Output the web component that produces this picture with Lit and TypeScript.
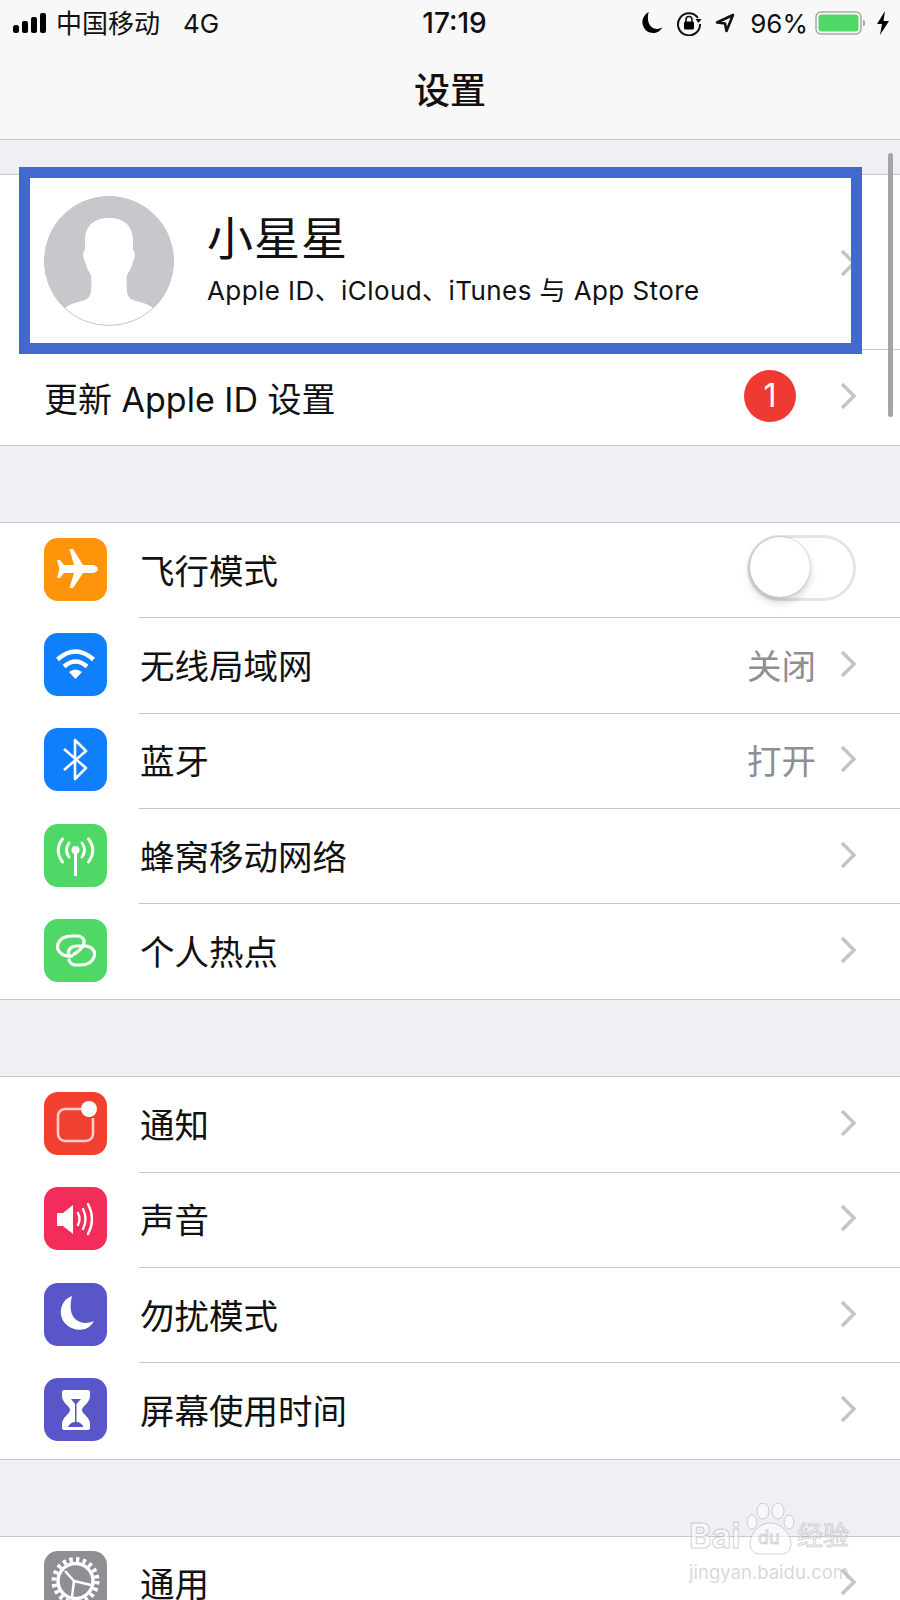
import { LitElement, html, css, svg } from "lit";
import { customElement } from "lit/decorators.js";

// Iconos de la lista, todos sobre un viewBox de 63x63
const ICONS: Record<string, unknown> = {
  plane: svg`<path fill="#fff" d="M54 31c0-2-3-4-6-4H39L29 11h-3.500L30 27H20l-4-5h-3l2.500 9L13 40h3l4-5h10l-4.500 15H29l10-15h9c3 0 6-2 6-4z"/>`,
  wifi: svg`<g fill="none" stroke="#fff" stroke-width="4.500"><path d="M13.500 26.500Q31.500 10.500 49.500 26.500"/><path d="M20 33.500Q31.500 23.500 43 33.500"/></g><path fill="#fff" d="M31.500 46L25 39Q31.500 34 38 39z"/>`,
  bluetooth: svg`<path fill="none" stroke="#fff" stroke-width="2.600" stroke-linejoin="round" d="M20 21L42 40 31 51V12L42 23 20 42"/>`,
  cellular: svg`<g fill="none" stroke="#fff" stroke-width="3" stroke-linecap="round"><path d="M25 19Q20 26 25 33"/><path d="M18.500 15Q10 26 18.500 38"/><path d="M38 19Q43 26 38 33"/><path d="M44.500 15Q53 26 44.500 38"/></g><circle cx="31.500" cy="26" r="4" fill="#fff"/><path stroke="#fff" stroke-width="3" d="M31.500 27V52"/>`,
  hotspot: svg`<g fill="none" stroke="#fff" stroke-width="3.200" stroke-linecap="round"><path d="M28 37C17 38 12 31 14 25C16 19 22 17 28 17H33C39 17 42 22 39 27"/><path d="M25 36C23 31 27 27 33 27H42C49 28 52 33 50 38C48 44 42 46 36 46H32C28 46 26 44 25 41"/><path d="M30 35C33 33 36 32 38 28"/></g>`,
  notify: svg`<path fill="none" stroke="#fff" stroke-opacity=".75" stroke-width="2.600" d="M37 17H21a7 7 0 0 0-7 7v18a7 7 0 0 0 7 7h21a7 7 0 0 0 7-7V26"/><circle cx="45" cy="17" r="8" fill="#fff"/>`,
  sound: svg`<path fill="#fff" d="M13 26h6l10-8v29l-10-8h-6z"/><g fill="none" stroke="#fff" stroke-width="2.400" stroke-linecap="round"><path d="M34 26Q37 32 34 38"/><path d="M39 22Q44 32 39 42"/><path d="M44 17Q52 32 44 47"/></g>`,
  moon: svg`<path fill="#fff" d="M28 13C19 16 16 25 17 32c2 11 14 17 24 14 3-1 7-4 9-8-11 5-21 0-23-10-1-5 0-11 1-15z"/>`,
  hourglass: svg`<path fill="#fff" d="M20 12h24a2 2 0 0 1 2 2v4c0 7-8 10-8 14s8 7 8 14v4a2 2 0 0 1-2 2H20a2 2 0 0 1-2-2v-4c0-7 8-10 8-14s-8-7-8-14v-4a2 2 0 0 1 2-2z"/><path fill="#5856c8" d="M27 21h10l-4.500 5v18c3 0 6 2 7 5H24c1-3 4-5 7-5V26z"/>`,
  gear: svg`<circle cx="31.500" cy="30" r="17.500" fill="none" stroke="#fff" stroke-width="3.500"/><circle cx="31.500" cy="30" r="21.500" fill="none" stroke="#fff" stroke-width="5" stroke-dasharray="3.400 3.350"/><path fill="none" stroke="#fff" stroke-width="2.500" d="M30 30L21 20M30 30L47 34M30 30L28 46"/>`,
};

// Secciones de ajustes: [icono, color, texto, valor]
const GROUPS = [
  [
    { icon: "plane", color: "#fd9409", label: "飞行模式", toggle: true },
    { icon: "wifi", color: "#107ffb", label: "无线局域网", value: "关闭" },
    { icon: "bluetooth", color: "#107ffb", label: "蓝牙", value: "打开" },
    { icon: "cellular", color: "#4fd865", label: "蜂窝移动网络" },
    { icon: "hotspot", color: "#4fd865", label: "个人热点" },
  ],
  [
    { icon: "notify", color: "#f1402f", label: "通知" },
    { icon: "sound", color: "#f42c5a", label: "声音" },
    { icon: "moon", color: "#5856c8", label: "勿扰模式" },
    { icon: "hourglass", color: "#5856c8", label: "屏幕使用时间" },
  ],
  [{ icon: "gear", color: "#8e8e93", label: "通用" }],
];

const chevron = html`<svg class="chevron" viewBox="0 0 16 28">
  <path d="M2 2l12 12L2 26" />
</svg>`;

@customElement("app-root")
export class AppRoot extends LitElement {
  static styles = css`
    :host {
      display: block;
      position: relative;
      width: 900px;
      height: 1600px;
      overflow: hidden;
      background: #efeff4;
      color: #111;
      font-family: Inter, "Noto Sans CJK SC", sans-serif;
    }

    /* Barra superior */
    .header {
      height: 139px;
      background: #f8f8f9;
      border-bottom: 1px solid #c4c4c8;
    }
    .status {
      display: flex;
      align-items: center;
      height: 46px;
      padding: 0 10px 0 13px;
      font-size: 26px;
    }
    .status svg {
      flex: none;
      display: block;
    }
    .carrier {
      margin-left: 8px;
      font-size: 26px;
      margin-top: -4px;
    }
    .net {
      margin-left: 23px;
    }
    .clock {
      position: absolute;
      left: 0;
      right: 0;
      top: 0;
      height: 46px;
      line-height: 46px;
      text-align: center;
      font-weight: 500;
      font-size: 28px;
      padding-left: 9px;
    }
    .status-right {
      display: flex;
      align-items: center;
      margin-left: auto;
    }
    .title {
      text-align: center;
      font-size: 36px;
      font-weight: 500;
      line-height: 44px;
      margin-top: 23px;
    }

    /* Secciones */
    .group {
      background: #fff;
      border-top: 1px solid #c8c8cc;
      border-bottom: 1px solid #c8c8cc;
      margin-top: 76px;
    }
    .group.account {
      margin-top: 34px;
    }
    .profile {
      display: flex;
      align-items: center;
      height: 175px;
      padding: 0 44px;
      position: relative;
    }
    .profile::after,
    .row + .row::before {
      content: "";
      position: absolute;
      right: 0;
      top: -1px;
      border-top: 1px solid #c8c8cc;
    }
    .profile::after {
      top: auto;
      bottom: 0;
      left: 44px;
    }
    .row + .row::before {
      left: 139px;
    }
    .avatar {
      width: 130px;
      height: 130px;
      flex: none;
      margin-top: -4px;
    }
    .who {
      margin-left: 33px;
      flex: 1;
    }
    .name {
      font-size: 46px;
      line-height: 54px;
      letter-spacing: 1px;
      margin-top: -6px;
    }
    .sub {
      font-size: 26px;
      letter-spacing: 0.42px;
      line-height: 36px;
      margin-top: 8px;
    }
    .row {
      display: flex;
      align-items: center;
      height: 95.300px;
      padding-left: 44px;
      padding-right: 44px;
      position: relative;
      font-size: 34.500px;
    }
    .row.update {
      height: 95px;
    }
    .icon {
      flex: none;
      width: 63px;
      height: 63px;
      border-radius: 14px;
      margin-right: 33px;
      margin-bottom: 3px;
    }
    .label {
      flex: 1;
      padding-bottom: 4px;
      white-space: nowrap;
    }
    .update .label {
      font-size: 34px;
      padding-bottom: 0;
    }
    .value {
      color: #8e8e93;
      margin-right: 24px;
      padding-bottom: 4px;
    }
    .badge {
      width: 52px;
      height: 52px;
      border-radius: 50%;
      background: #ef3a33;
      color: #fff;
      font-size: 32px;
      line-height: 52px;
      text-align: center;
      margin-right: 44px;
      margin-top: -4px;
    }
    .chevron {
      flex: none;
      width: 16px;
      height: 28px;
      margin-top: -4px;
    }
    .chevron path {
      fill: none;
      stroke: #c4c4c9;
      stroke-width: 3.500px;
    }
    .profile .chevron {
      margin-top: 0;
    }

    /* Interruptor apagado */
    .toggle {
      box-sizing: border-box;
      width: 109px;
      height: 66px;
      border: 3px solid #e4e4e6;
      border-radius: 33px;
      margin-top: -6px;
      position: relative;
    }
    .toggle::after {
      content: "";
      position: absolute;
      left: 0;
      top: -1px;
      width: 60px;
      height: 60px;
      border-radius: 50%;
      background: #fff;
      box-shadow: 0 5px 9px rgba(0, 0, 0, 0.18), 0 0 2px rgba(0, 0, 0, 0.3);
    }

    /* Elementos superpuestos a la captura */
    .highlight {
      position: absolute;
      left: 19px;
      top: 167px;
      width: 843px;
      height: 187px;
      box-sizing: border-box;
      border: 11px solid #4368cf;
    }
    .scrollbar {
      position: absolute;
      left: 888px;
      top: 153px;
      width: 5px;
      height: 264px;
      border-radius: 3px;
      background: #a4a4a9;
    }
    .watermark {
      position: absolute;
      left: 689px;
      top: 1503px;
      width: 170px;
      color: rgba(255, 255, 255, 0.55);
    }
    .mark-main {
      display: flex;
      align-items: flex-end;
      height: 52px;
      -webkit-text-stroke: 1px rgba(165, 165, 170, 0.5);
      white-space: nowrap;
    }
    .mark-bai {
      width: 55px;
      font-size: 34px;
      font-weight: 700;
      line-height: 38px;
    }
    .mark-paw {
      position: relative;
      flex: none;
      width: 53px;
      height: 52px;
    }
    .mark-du {
      position: absolute;
      left: 14px;
      top: 24px;
      font-size: 18px;
      line-height: 22px;
    }
    .mark-jy {
      font-size: 26px;
      line-height: 38px;
    }
    .mark-url {
      font-size: 18.500px;
      line-height: 22px;
      margin-top: 6px;
      white-space: nowrap;
      color: rgba(190, 190, 195, 0.6);
    }
  `;

  renderStatus() {
    return html`<div class="status">
      <svg width="35" height="22" viewBox="0 0 35 22">
        <rect x="0" y="13" width="6" height="8" rx="2.500" />
        <rect x="9" y="9" width="6" height="12" rx="2" />
        <rect x="18" y="5" width="6" height="16" rx="2" />
        <rect x="27" y="1" width="6" height="20" rx="2" />
      </svg>
      <span class="carrier">中国移动</span>
      <span class="net">4G</span>
      <div class="clock">17:19</div>
      <div class="status-right">
        <svg width="24" height="24" viewBox="0 0 22 22" style="margin-right:12px">
          <path d="M8 1C3 4 1 9 3 14c2 6 10 8 15 4 1-1 2-2 3-3-6 3-11 1-13-4C7 8 7 4 8 1z" />
        </svg>
        <svg width="26" height="26" viewBox="0 0 26 26" style="margin-right:13px">
          <path fill="none" stroke="#111" stroke-width="2" d="M22 8A11 11 0 1 0 24 14" />
          <path d="M19.500 9h6l-3 4z" />
          <path fill="none" stroke="#111" stroke-width="1.600" d="M10 12V9.500a3 3 0 0 1 6 0V12" />
          <rect x="8" y="11.500" width="10" height="8" rx="1.500" />
        </svg>
        <svg width="20" height="20" viewBox="0 0 20 20" style="margin-right:15px">
          <path fill="none" stroke="#111" stroke-width="2.600" stroke-linejoin="round" d="M18 2L2 9.500l8 1 1.500 7.500z" />
        </svg>
        <span>96%</span>
        <svg width="51" height="24" viewBox="0 0 51 24" style="margin-left:7px">
          <rect x="1" y="1" width="45" height="22" rx="5" fill="none" stroke="#a8a8a8" stroke-width="1.500" />
          <rect x="3.500" y="3.500" width="40" height="17" rx="3" fill="#4fd865" />
          <path fill="#a8a8a8" d="M48 9c2 0 2 1 2 3s0 3-2 3z" />
        </svg>
        <svg width="14" height="24" viewBox="0 0 14 24" style="margin-left:10px">
          <path d="M9 0L1 13h5l-2 11 9-14H7.500z" />
        </svg>
      </div>
    </div>`;
  }

  renderAvatar() {
    return html`<svg class="avatar" viewBox="0 0 130 130">
      <defs>
        <clipPath id="round"><circle cx="65" cy="65" r="65" /></clipPath>
      </defs>
      <g clip-path="url(#round)">
        <circle cx="65" cy="65" r="65" fill="#c7c7cc" />
        <path
          fill="#fff"
          d="M65 22C50 22 41 30 41 44V54C38 56 39 62 41 65C42 71 44 74 47 79C48 86 47 92 47 96C46 102 42 104 38 105C30 107 24 109 20 113V135H110V113C106 109 100 107 92 105C88 104 84 102 83 96C83 92 82 86 83 79C86 74 88 71 89 65C91 62 92 56 89 54V44C89 30 80 22 65 22Z"
        />
      </g>
      <circle cx="65" cy="65" r="64.500" fill="none" stroke="#c7c7cc" />
    </svg>`;
  }

  renderRow(item: any) {
    return html`<div class="row">
      <svg class="icon" viewBox="0 0 63 63" style="background:${item.color}">
        ${ICONS[item.icon]}
      </svg>
      <span class="label">${item.label}</span>
      ${item.value ? html`<span class="value">${item.value}</span>` : ""}
      ${item.toggle ? html`<div class="toggle"></div>` : chevron}
    </div>`;
  }

  render() {
    return html`
      <div class="header">
        ${this.renderStatus()}
        <div class="title">设置</div>
      </div>

      <div class="group account">
        <div class="profile">
          ${this.renderAvatar()}
          <div class="who">
            <div class="name">小星星</div>
            <div class="sub">Apple ID、iCloud、iTunes 与 App Store</div>
          </div>
          ${chevron}
        </div>
        <div class="row update">
          <span class="label">更新 Apple ID 设置</span>
          <div class="badge">1</div>
          ${chevron}
        </div>
      </div>

      ${GROUPS.map(
        (rows) => html`<div class="group">
          ${rows.map((item) => this.renderRow(item))}
        </div>`
      )}

      <div class="highlight"></div>
      <div class="scrollbar"></div>
      <div class="watermark">
        <div class="mark-main">
          <span class="mark-bai">Bai</span>
          <div class="mark-paw">
            <svg width="53" height="52" viewBox="0 0 53 52" fill="currentColor" stroke="rgba(165,165,170,.5)">
              <ellipse cx="8" cy="19" rx="5" ry="7" />
              <ellipse cx="19" cy="8" rx="6" ry="8" />
              <ellipse cx="34" cy="8" rx="6" ry="8" />
              <ellipse cx="45" cy="19" rx="5" ry="7" />
              <path d="M26 20c-10 0-20 10-20 21 0 7 5 10 10 10h21c5 0 10-3 10-10 0-11-10-21-21-21z" />
            </svg>
            <span class="mark-du">du</span>
          </div>
          <span class="mark-jy">经验</span>
        </div>
        <div class="mark-url">jingyan.baidu.com</div>
      </div>
    `;
  }
}
